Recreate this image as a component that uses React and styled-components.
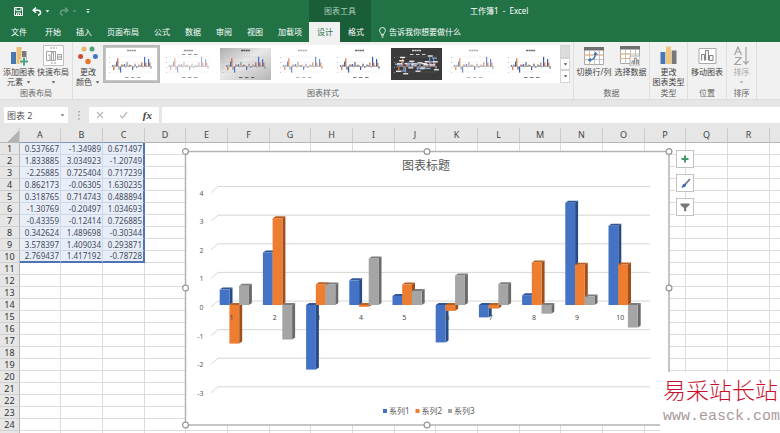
import React from "react";
import styled, { createGlobalStyle } from "styled-components";

const GlobalStyle = createGlobalStyle`
  *, *::before, *::after { box-sizing: border-box; }
  html, body { margin: 0; height: 100%; overflow: hidden; }
  body { font-family: "Noto Sans", "Noto Sans CJK SC", sans-serif; font-size: 8px; color: #444; }
  button, input { font: inherit; color: inherit; border: 0; padding: 0; margin: 0; background: none; border-radius: 0; }
  svg { display: block; flex: none; }
`;

const FONT = '"Noto Sans", "Noto Sans CJK SC", sans-serif';

const Window = styled.div`
  display: flex;
  flex-direction: column;
  height: 100vh;
  overflow: hidden;
  background: #fff;
`;

/* ---------- title bar and tabs ---------- */
const Header = styled.header`
  display: flex;
  flex: none;
  background: #217346;
  color: #fff;
`;
const HeaderPart = styled.div`
  display: flex;
  flex-direction: column;
  flex: ${(p) => (p.$grow ? "1 1 0" : "none")};
  min-width: 0;
  background: ${(p) => (p.$context ? "#1a5e38" : "transparent")};
`;
const TitleRow = styled.div`
  display: flex;
  align-items: center;
  height: 22px;
  gap: ${(p) => p.$gap || 0}px;
  padding-left: ${(p) => p.$pad || 0}px;
  justify-content: ${(p) => (p.$center ? "center" : "flex-start")};
  color: ${(p) => (p.$center ? "#a9cdb9" : "#fff")};
  white-space: nowrap;
  line-height: 12px;
`;
const TabRow = styled.nav`
  display: flex;
  height: 20px;
  padding-left: ${(p) => p.$pad || 0}px;
`;
const Tab = styled.button`
  display: flex;
  align-items: center;
  gap: 3px;
  padding: 0 ${(p) => (p.$wide ? 10 : 7)}px 0 8px;
  white-space: nowrap;
  line-height: 12px;
  background: ${(p) => (p.$active ? "#f1f1f1" : "transparent")};
  color: ${(p) => (p.$active ? "#217346" : "#fff")};
`;
const QuickButton = styled.button`
  display: flex;
  align-items: center;
  gap: 3px;
  opacity: ${(p) => (p.$dim ? 0.3 : 1)};
`;

/* ---------- ribbon ---------- */
const Ribbon = styled.section`
  display: flex;
  flex: none;
  height: 58px;
  background: #f1f1f1;
  border-bottom: 1px solid #dcdcdc;
`;
const Group = styled.div`
  display: flex;
  flex-direction: column;
  flex: none;
  min-width: ${(p) => p.$min || 0}px;
  padding: 3px ${(p) => p.$pad}px 0;
  border-right: 1px solid #dedede;
`;
const GroupBody = styled.div`
  display: flex;
  justify-content: center;
  gap: ${(p) => p.$gap || 0}px;
  height: 43px;
`;
const GroupLabel = styled.div`
  text-align: center;
  line-height: 12px;
  color: #666;
  white-space: nowrap;
`;
const BigButton = styled.button`
  display: flex;
  flex-direction: column;
  align-items: center;
  gap: 1px;
  line-height: 10px;
  white-space: nowrap;
  color: ${(p) => (p.disabled ? "#aaa" : "#444")};
`;
const IconBox = styled.span`
  display: flex;
  align-items: center;
  height: 21px;
`;
const ButtonLine = styled.span`
  display: flex;
  align-items: center;
  gap: 3px;
  height: 10px;
`;
const ButtonText = styled.span`
  display: flex;
  flex-direction: column;
  align-items: center;
`;
const Gallery = styled.div`
  display: flex;
  height: 38px;
  background: #fff;
`;
const Thumb = styled.button`
  display: flex;
  align-items: center;
  justify-content: center;
  width: 57px;
  height: 38px;
  border: ${(p) => (p.$selected ? "2px solid #b9b9b9" : "0")};
  outline: ${(p) => (p.$selected ? "1px solid #c9c9c9" : "0")};
  outline-offset: -3px;
`;
const Scroller = styled.div`
  display: flex;
  flex-direction: column;
  width: 10px;
  margin-left: 1px;
`;
const ScrollButton = styled.button`
  display: flex;
  flex: 1;
  align-items: center;
  justify-content: center;
  border: 1px solid #d5d5d5;
  background: ${(p) => (p.disabled ? "#dcdcdc" : "#fff")};
`;

/* ---------- formula bar ---------- */
const FormulaBar = styled.div`
  display: flex;
  flex: none;
  align-items: center;
  height: 28px;
  padding: 2px 0 0 4px;
  background: #e6e6e6;
`;
const NameBox = styled.div`
  display: flex;
  align-items: center;
  width: 64px;
  height: 16px;
  padding: 0 3px;
  background: #fff;
`;
const NameInput = styled.input`
  flex: 1;
  min-width: 0;
  height: 14px;
  font-size: 9px;
  color: #555;
  outline: 0;
`;
const Dots = styled.span`
  width: 21px;
  display: flex;
  justify-content: center;
`;
const FormulaTools = styled.div`
  display: flex;
  align-items: center;
  justify-content: space-between;
  width: 70px;
  height: 16px;
  padding: 0 7px;
  margin-right: 3px;
  background: #fff;
`;
const FormulaButton = styled.button`
  display: flex;
  font-family: "Liberation Serif", serif;
  font-style: italic;
  font-weight: 700;
  font-size: 11px;
  line-height: 14px;
`;
const FormulaInput = styled.input`
  flex: 1;
  min-width: 0;
  height: 16px;
  background: #fff;
  outline: 0;
`;

/* ---------- sheet ---------- */
const Sheet = styled.main`
  position: relative;
  flex: 1;
  min-height: 0;
  overflow: hidden;
`;
const Grid = styled.table`
  table-layout: fixed;
  width: 0;
  border-collapse: separate;
  border-spacing: 0;
`;
const Col = styled.col`
  width: ${(p) => p.$w}px;
`;
const ColHead = styled.th`
  height: 15px;
  padding: 0;
  font-size: 9px;
  line-height: 14px;
  font-weight: 400;
  color: #444;
  background: #e6e6e6;
  border-right: 1px solid #cbcbcb;
  border-bottom: 1px solid ${(p) => (p.$sel ? "#8799b8" : "#b5b5b5")};
`;
const Corner = styled(ColHead)`
  background: linear-gradient(135deg, #e6e6e6 65%, #b4b4b4 65%);
`;
const RowHead = styled.th`
  height: 12px;
  padding: 0;
  font-size: 9px;
  line-height: 11px;
  font-weight: 400;
  color: #333;
  background: #e6e6e6;
  border-right: 1px solid #b5b5b5;
  border-bottom: 1px solid #d0d0d0;
`;
const Cell = styled.td`
  height: 12px;
  padding: 0 1px 0 0;
  text-align: right;
  font-size: 8px;
  line-height: 10px;
  white-space: nowrap;
  color: #444b5c;
  background: ${(p) => (p.$sel ? "#e8eef8" : "#fff")};
  border-right: ${(p) => (p.$right ? "2px solid #4f73b3" : "1px solid " + (p.$sel ? "#cfd8e8" : "#dcdcdc"))};
  border-bottom: ${(p) => (p.$bottom ? "2px solid #4f73b3" : "1px solid " + (p.$sel ? "#cfd8e8" : "#dcdcdc"))};
`;

/* The chart floats over the cells, as do its buttons and the site badge. */
const ChartFrame = styled.figure`
  position: absolute;
  left: 182px;
  top: 20px;
  margin: 0;
`;
const ChartTools = styled.div`
  position: absolute;
  left: 676px;
  top: 22px;
  display: flex;
  flex-direction: column;
  gap: 6px;
`;
const ChartTool = styled.button`
  display: flex;
  align-items: center;
  justify-content: center;
  width: 18px;
  height: 18px;
  background: #fff;
  border: 1px solid #c3c3c3;
`;
const Badge = styled.aside`
  position: absolute;
  right: 0;
  bottom: 0;
  width: 120px;
  height: 61px;
  padding: 4px 0 0 3px;
  background: #fff;
  white-space: nowrap;
  overflow: hidden;
`;
const BadgeName = styled.div`
  font-family: "Noto Sans CJK SC", sans-serif;
  font-weight: 300;
  font-size: 23px;
  line-height: 26px;
  color: #c8102e;
`;
const BadgeLink = styled.a`
  display: block;
  font-family: "Liberation Mono", monospace;
  font-size: 15px;
  line-height: 30px;
  color: #a99a9a;
  text-decoration: none;
`;

const data = [
  ["0.537667", "-1.34989", "0.671497"],
  ["1.833885", "3.034923", "-1.20749"],
  ["-2.25885", "0.725404", "0.717239"],
  ["0.862173", "-0.06305", "1.630235"],
  ["0.318765", "0.714743", "0.488894"],
  ["-1.30769", "-0.20497", "1.034693"],
  ["-0.43359", "-0.12414", "0.726885"],
  ["0.342624", "1.489698", "-0.30344"],
  ["3.578397", "1.409034", "0.293871"],
  ["2.769437", "1.417192", "-0.78728"],
];
const columns = [..."ABCDEFGHIJKLMNOPQR"];
const columnWidths = [41, 42, 42];
const rowCount = 24;

const series = [
  { name: "系列1", front: "#4472c4", side: "#284a86", top: "#305494" },
  { name: "系列2", front: "#ed7d31", side: "#9e4f1c", top: "#b85f22" },
  { name: "系列3", front: "#a5a5a5", side: "#6a6a6a", top: "#7c7c7c" },
];

const Caret = ({ color = "#555" }) => (
  <svg width="5" height="3" viewBox="0 0 5 3"><path d="M.7.3h3.6L2.5 2.5z" fill={color} /></svg>
);

function Thumbnail({ bg = "#fff", dark, colors, title = "#777", sub, grid = "#e4e4e4" }) {
  return (
    <svg width="51" height="32" viewBox="0 0 51 32" aria-hidden="true">
      <defs>
        <linearGradient id="thumb-shade" x1="0" y1="0" x2="1" y2="1">
          <stop offset="0" stopColor="#adadad" />
          <stop offset=".45" stopColor="#e9e9e9" />
          <stop offset="1" stopColor="#b5b5b5" />
        </linearGradient>
      </defs>
      <rect width="51" height="32" fill={bg} />
      <path d="M21 2.5h9" stroke={title} strokeWidth="1.4" strokeDasharray="2 .4" opacity=".8" />
      <path d="M19 29.5h3.500m2.500 0h3.500m2.500 0h3.500" stroke={dark ? bg : title} strokeWidth="1" opacity=".7" />
      {sub && <path d="M19 6.500h3.500m2.500 0h3.500m2.500 0h3.500" stroke={title} strokeWidth="1" opacity=".8" />}
      <path d="M5 9h41M5 14h41M5 24h41" stroke={grid} strokeWidth=".4" />
      <path d="M5 18.500h41" stroke={dark ? "#999" : "#bbb"} strokeWidth=".5" />
      <path d="M3.500 9v1m0 4v1m0 4v1m0 4v1" stroke="#aaa" strokeWidth=".7" />
      {data.map((row, i) =>
        row.map((v, j) => {
          const h = Math.max(0.8, Math.abs(v) * 2.7);
          return (
            <rect key={`${i}-${j}`} x={6 + i * 4 + j * 1.2} y={v > 0 ? 18.5 - h : 18.5} width="1.200" height={h} fill={colors[j]} />
          );
        })
      )}
      {dark &&
        data.map((row, i) =>
          row.map((v, j) => (
            <rect key={`${i}-${j}`} x={4 + i * 4.1 + j} y={(v > 0 ? 17 : 19) - v * 2.7} width="5" height="1.300" fill={(i + j) % 3 ? "#f2f2f2" : "#8fa8d8"} />
          ))
        )}
    </svg>
  );
}

const bright = ["#4472c4", "#c0622b", "#888"];
const soft = ["#9fb2dc", "#e6b294", "#c0c0c0"];
const mid = ["#6f8dcb", "#d98a5c", "#a5a5a5"];
const deep = ["#3b5ca8", "#c8743f", "#555c70"];
const styles = [
  { colors: bright },
  { colors: soft, sub: true },
  { colors: bright, bg: "url(#thumb-shade)", title: "#333", grid: "#c4c4c4" },
  { colors: mid, title: "#999" },
  { colors: deep, title: "#444" },
  { colors: ["#6d90dd", "#ee8a4b", "#bbb"], bg: "#3b3b3b", title: "#fff", sub: true, dark: true, grid: "#666" },
  { colors: mid, title: "#999" },
  { colors: deep, title: "#444" },
];

/* ---------- chart ---------- */
const zeroY = 157;
const unit = 28.6;

function Bar({ x, value, tone }) {
  const w = 9.8;
  const top = value > 0 ? zeroY - value * unit : zeroY;
  const h = Math.max(1.2, Math.abs(value) * unit);
  return (
    <g>
      <path d={`M${x} ${top}l3-2h${w}l-3 2z`} fill={tone.top} />
      <path d={`M${x + w} ${top}l3-2v${h}l-3 2z`} fill={tone.side} />
      <rect x={x} y={top} width={w} height={h} fill={tone.front} />
    </g>
  );
}

function Chart() {
  const handles = [[3.5, 3.5], [245, 3.5], [487, 3.5], [3.5, 140], [487, 140], [3.5, 277], [245, 277], [487, 277]];
  return (
    <ChartFrame>
      <svg width="491" height="281" viewBox="0 0 491 281" role="img" aria-label="图表标题" fontFamily={FONT}>
        <rect x="3.500" y="3.500" width="483.500" height="273.500" fill="#fff" stroke="#b3b3b3" strokeWidth="1.500" />
        <g transform="translate(3 4)">
          <text x="241" y="18" textAnchor="middle" fontSize="12" fill="#595959">图表标题</text>
          {[4, 3, 2, 1, 0, -1, -2, -3].map((n) => {
            const y = zeroY - 4 - n * unit;
            return (
              <g key={n}>
                <path d={`M26 ${y + 2}L33 ${y - 4}H465`} fill="none" stroke="#d6d6d6" />
                <text x="18.500" y={y + 5} textAnchor="end" fontSize="7" fill="#595959">{n}</text>
              </g>
            );
          })}
          <g transform="translate(0 -4)">
            {data.map((row, i) =>
              row.map((v, j) => <Bar key={`${i}-${j}`} x={34.7 + i * 43.2 + j * 9.7} value={Number(v)} tone={series[j]} />)
            )}
            {data.map((_, i) => (
              <text key={i} x={46.5 + i * 43.2} y="171.500" textAnchor="middle" fontSize="7" fill="#4a4a4a">{i + 1}</text>
            ))}
          </g>
          {series.map((s, i) => (
            <g key={s.name} transform={`translate(${198 + i * 32.5} 0)`}>
              <rect y="257" width="4" height="4" fill={s.front} />
              <text x="6" y="262" fontSize="8" fill="#595959">{s.name}</text>
            </g>
          ))}
        </g>
        {handles.map(([x, y]) => (
          <circle key={`${x}-${y}`} cx={x} cy={y} r="2.900" fill="#fff" stroke="#949494" strokeWidth="1.200" />
        ))}
      </svg>
    </ChartFrame>
  );
}

/* ---------- icons ---------- */
const SaveIcon = () => (
  <svg width="9" height="9" viewBox="0 0 9 9"><path d="M.5.5h8v8h-8zM2 .5v3.200h5V.5M2.500 8.500V6h4v2.500" fill="none" stroke="#fff" /><path d="M4 6.500h1V8H4z" fill="#fff" /></svg>
);
const UndoIcon = ({ flip }) => (
  <svg width="10" height="9" viewBox="0 0 10 9"><g transform={flip ? "translate(10 0) scale(-1 1)" : undefined} fill="none" stroke="#fff" strokeWidth="1.500"><path d="M4 .6L1.200 3.200 4 5.800" /><path d="M1.500 3.200H6c3.400 0 3.400 4.600 0 4.800" /></g></svg>
);
const CustomizeIcon = () => (
  <svg width="4" height="5" viewBox="0 0 4 5"><path d="M.5.5h3" stroke="#fff" strokeWidth=".8" /><path d="M.4 2.200h3.200L2 4.200z" fill="#fff" /></svg>
);
const BulbIcon = () => (
  <svg width="7" height="11" viewBox="0 0 7 11"><path d="M2.300 7.500C2.300 6 .6 5.300.6 3.400a2.900 2.900 0 0 1 5.800 0c0 1.900-1.700 2.600-1.700 4.100zM2.300 8.800h2.400M2.700 10.200h1.600" fill="none" stroke="#fff" strokeWidth=".9" /></svg>
);
const AddElementIcon = () => (
  <svg width="20" height="20" viewBox="0 0 20 20"><path d="M2 6h5v12H2z" fill="#4679b4" /><path d="M7.500 1h5v17h-5z" fill="#e8c07a" /><path d="M13 5h4.500v9H13z" fill="#7c7c7c" /><path d="M15 11v9M10.500 15.500h9" stroke="#f1f1f1" strokeWidth="4" /><path d="M15 11.500v8M11 15.500h8" stroke="#4fa085" strokeWidth="2" /></svg>
);
const LayoutIcon = () => (
  <svg width="21" height="21" viewBox="0 0 21 21"><path d="M.5.5h20v20H.5z" fill="#fff" stroke="#c0c0c0" /><path d="M7 3h7M8 18h6" stroke="#999" strokeDasharray="2 1" /><path d="M3.500 6.500h9v9h-9zM5 10h2v5M8.500 15V7.500h2V15" fill="none" stroke="#999" strokeWidth=".9" /><path d="M14.500 9.500h4v5h-4zM14.500 12h4" fill="#eee" stroke="#999" strokeWidth=".9" /></svg>
);
const ColorsIcon = () => (
  <svg width="20" height="20" viewBox="0 0 20 20"><circle cx="6" cy="3" r="2.500" fill="#e6b866" /><circle cx="14" cy="3" r="2.500" fill="#4f9f7f" /><circle cx="2.600" cy="10.500" r="2.500" fill="#cf4a38" /><circle cx="17.400" cy="10.500" r="2.500" fill="#3f78c6" /><circle cx="10" cy="15.500" r="2.700" fill="#e2742c" /></svg>
);
const TableBase = () => (
  <><path d="M.5.5h19v17H.5z" fill="#fff" stroke="#aaa" /><path d="M0 0h20v3.500H0z" fill="#707070" /><path d="M.5 8h19M.5 12.500h19M5.500 3.500v14M10.500 3.500v14M15.500 3.500v14" stroke="#b5b5b5" strokeWidth=".8" /></>
);
const SwitchIcon = () => (
  <svg width="20" height="18" viewBox="0 0 20 18"><TableBase /><path d="M5.500 3.500v14M.5 8h19" stroke="#eab27e" strokeWidth=".9" /><path d="M5.500 13q5.500 0 6-6" fill="none" stroke="#3b6fb8" strokeWidth="1.300" /><path d="M3.800 13l3-2.200v4.400zM9.400 7.800l2.300-3 2.300 3z" fill="#3b6fb8" /></svg>
);
const SelectDataIcon = () => (
  <svg width="20" height="20" viewBox="0 0 20 20"><TableBase /><path d="M.5 8h10v4.500H.5" fill="none" stroke="#eab27e" /><path d="M10 10h10v10H10z" fill="#f6f6f6" stroke="#999" strokeWidth=".7" /><path d="M12 18.500V15h1.700v3.500M14.500 18.500V12h1.800v6.500M17 18.500V14h1.500v4.500" fill="none" stroke="#777" strokeWidth=".8" /></svg>
);
const TypeIcon = () => (
  <svg width="17" height="19" viewBox="0 0 17 19"><path d="M.5 6h4.800v12H.5z" fill="#4679b4" /><path d="M6 .5h5v17.500H6z" fill="#efc678" /><path d="M11.700 4.500h4.800V18h-4.800z" fill="#777" /></svg>
);
const MoveIcon = () => (
  <svg width="19" height="18" viewBox="0 0 19 18"><path d="M1 1.500h17v15H1z" fill="#fff" stroke="#aaa" /><path d="M3.500 13.500v-6h3v6M7.500 13.500V3.500h3v10M11.500 13.500v-5H15v5z" fill="#f4f4f4" stroke="#858585" /></svg>
);
const SortIcon = () => (
  <svg width="17" height="20" viewBox="0 0 17 20" fill="none" stroke="#a4a4a4" strokeWidth="1.200"><path d="M1.500 9L5 1l3.500 8M2.700 6h4.600M2 11.500h6L1.800 18.500h6.500M13 1v17M10.300 15.200l2.700 3 2.700-3" /></svg>
);

const RibbonButton = ({ icon, lines, caret, disabled }) => (
  <BigButton disabled={disabled}>
    <IconBox>{icon}</IconBox>
    <ButtonText>
      {lines.map((line, i) => (
        <ButtonLine key={i}>
          {line}
          {caret && i === lines.length - 1 && <Caret color={disabled ? "#aaa" : "#555"} />}
        </ButtonLine>
      ))}
    </ButtonText>
  </BigButton>
);

export default function App() {
  return (
    <Window>
      <GlobalStyle />
      <Header>
        <HeaderPart>
          <TitleRow $pad={14} $gap={9}>
            <QuickButton aria-label="保存"><SaveIcon /></QuickButton>
            <QuickButton aria-label="撤消"><UndoIcon /><Caret color="#fff" /></QuickButton>
            <QuickButton aria-label="恢复" $dim><UndoIcon flip /><Caret color="#fff" /></QuickButton>
            <QuickButton aria-label="自定义快速访问工具栏"><CustomizeIcon /></QuickButton>
          </TitleRow>
          <TabRow $pad={3}>
            {["文件", "开始", "插入", "页面布局", "公式", "数据", "审阅", "视图", "加载项"].map((t, i) => (
              <Tab key={t} $wide={i === 0}>{t}</Tab>
            ))}
          </TabRow>
        </HeaderPart>
        <HeaderPart $context>
          <TitleRow $center>图表工具</TitleRow>
          <TabRow>
            <Tab $active>设计</Tab>
            <Tab>格式</Tab>
          </TabRow>
        </HeaderPart>
        <HeaderPart $grow>
          <TitleRow $pad={99}>工作簿1&nbsp; -&nbsp; Excel</TitleRow>
          <TabRow>
            <Tab><BulbIcon />告诉我你想要做什么</Tab>
          </TabRow>
        </HeaderPart>
      </Header>

      <Ribbon>
        <Group $pad={2} $min={73}>
          <GroupBody $gap={2}>
            <RibbonButton icon={<AddElementIcon />} lines={["添加图表", "元素"]} caret />
            <RibbonButton icon={<LayoutIcon />} lines={["快速布局", ""]} caret />
          </GroupBody>
          <GroupLabel>图表布局</GroupLabel>
        </Group>
        <Group $pad={3}>
          <GroupBody $gap={3}>
            <RibbonButton icon={<ColorsIcon />} lines={["更改", "颜色"]} caret />
            <Gallery>
              {styles.map((s, i) => (
                <Thumb key={i} $selected={i === 0} aria-label={`样式 ${i + 1}`}>
                  <Thumbnail {...s} />
                </Thumb>
              ))}
              <Scroller>
                <ScrollButton disabled aria-label="上一行" />
                <ScrollButton aria-label="下一行"><Caret /></ScrollButton>
                <ScrollButton aria-label="其他"><Caret /></ScrollButton>
              </Scroller>
            </Gallery>
          </GroupBody>
          <GroupLabel>图表样式</GroupLabel>
        </Group>
        <Group $pad={2} $min={76}>
          <GroupBody $gap={3}>
            <RibbonButton icon={<SwitchIcon />} lines={["切换行/列"]} />
            <RibbonButton icon={<SelectDataIcon />} lines={["选择数据"]} />
          </GroupBody>
          <GroupLabel>数据</GroupLabel>
        </Group>
        <Group $pad={2} $min={38}>
          <GroupBody><RibbonButton icon={<TypeIcon />} lines={["更改", "图表类型"]} /></GroupBody>
          <GroupLabel>类型</GroupLabel>
        </Group>
        <Group $pad={3} $min={39}>
          <GroupBody><RibbonButton icon={<MoveIcon />} lines={["移动图表"]} /></GroupBody>
          <GroupLabel>位置</GroupLabel>
        </Group>
        <Group $pad={3} $min={30}>
          <GroupBody><RibbonButton icon={<SortIcon />} lines={["排序", ""]} caret disabled /></GroupBody>
          <GroupLabel>排序</GroupLabel>
        </Group>
      </Ribbon>

      <FormulaBar>
        <NameBox>
          <NameInput aria-label="名称框" defaultValue="图表 2" />
          <Caret color="#777" />
        </NameBox>
        <Dots>
          <svg width="2" height="9" viewBox="0 0 2 9"><path d="M1 0v9" stroke="#999" strokeDasharray="1.500 2" strokeWidth="1.300" /></svg>
        </Dots>
        <FormulaTools>
          <FormulaButton aria-label="取消"><svg width="8" height="8" viewBox="0 0 8 8"><path d="M1 1l6 6M7 1L1 7" stroke="#b9b9b9" strokeWidth="1.200" /></svg></FormulaButton>
          <FormulaButton aria-label="输入"><svg width="9" height="8" viewBox="0 0 9 8"><path d="M1 4.500L3.500 7 8 1" fill="none" stroke="#b9b9b9" strokeWidth="1.300" /></svg></FormulaButton>
          <FormulaButton aria-label="插入函数">fx</FormulaButton>
        </FormulaTools>
        <FormulaInput aria-label="编辑栏" />
      </FormulaBar>

      <Sheet>
        <Grid>
          <colgroup>
            <Col $w={20} />
            {columns.map((c, i) => <Col key={c} $w={columnWidths[i % 3]} />)}
            <Col $w={42} />
          </colgroup>
          <thead>
            <tr>
              <Corner aria-label="全选" />
              {columns.map((c, i) => <ColHead key={c} $sel={i < 3}>{c}</ColHead>)}
              <ColHead />
            </tr>
          </thead>
          <tbody>
            {Array.from({ length: rowCount }, (_, r) => (
              <tr key={r}>
                <RowHead>{r + 1}</RowHead>
                {[...columns, ""].map((c, i) => {
                  const sel = r < data.length && i < 3;
                  return (
                    <Cell key={c} $sel={sel} $right={sel && i === 2} $bottom={sel && r === data.length - 1}>
                      {sel ? data[r][i] : null}
                    </Cell>
                  );
                })}
              </tr>
            ))}
            <tr>
              <RowHead />
              {[...columns, ""].map((c) => <Cell key={c} />)}
            </tr>
          </tbody>
        </Grid>
        <Chart />
        <ChartTools>
          <ChartTool aria-label="图表元素"><svg width="8" height="8" viewBox="0 0 8 8"><path d="M4 .5v7M.5 4h7" stroke="#3f9a70" strokeWidth="2" /></svg></ChartTool>
          <ChartTool aria-label="图表样式"><svg width="11" height="11" viewBox="0 0 11 11"><path d="M10 1L5.500 6" stroke="#667489" strokeWidth="1.800" /><path d="M5.500 5.500c1.300 1 .8 2.500-.6 3.200C3.700 9.500 2 9.600.8 9.500c1.500-.8 1.600-2.200 2.400-3.200.6-.8 1.600-1 2.300-.8z" fill="#4169ad" /></svg></ChartTool>
          <ChartTool aria-label="图表筛选器"><svg width="10" height="9" viewBox="0 0 10 9"><path d="M.5.5h9v1.500L6.200 5v3.700L4 7.800V5L.5 2z" fill="#777" /></svg></ChartTool>
        </ChartTools>
        <Badge>
          <BadgeName>易采站长站</BadgeName>
          <BadgeLink href="#">www.easck.com</BadgeLink>
        </Badge>
      </Sheet>
    </Window>
  );
}
